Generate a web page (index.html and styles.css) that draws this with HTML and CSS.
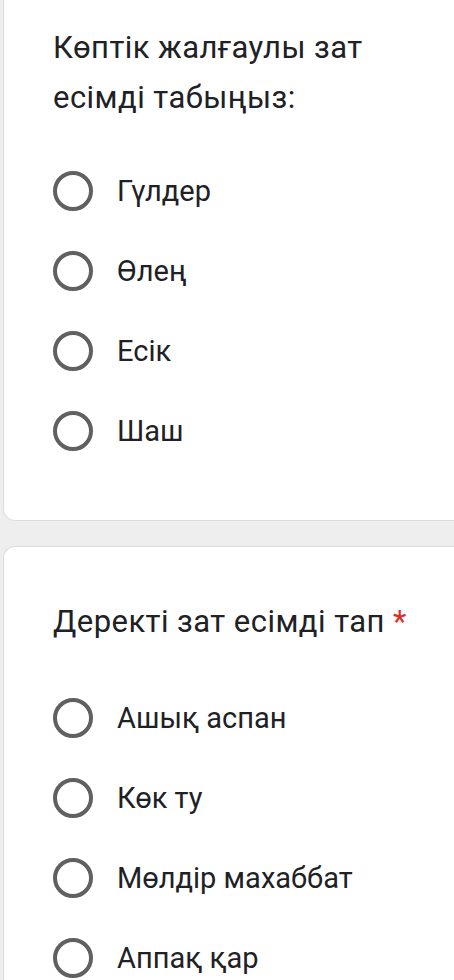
FILE: index.html
```html
<!DOCTYPE html>
<html lang="kk">
<head>
<meta charset="utf-8">
<link rel="stylesheet" href="styles.css">
</head>
<body>
<div class="page">
  <section class="card card-first">
    <div class="question">Көптік жалғаулы зат есімді табыңыз:</div>
    <div class="options">
      <div class="option"><span class="radio"></span><span class="label">Гүлдер</span></div>
      <div class="option"><span class="radio"></span><span class="label">Өлең</span></div>
      <div class="option"><span class="radio"></span><span class="label">Есік</span></div>
      <div class="option"><span class="radio"></span><span class="label">Шаш</span></div>
    </div>
  </section>
  <section class="card card-second">
    <div class="question">Деректі зат есімді тап <span class="req">*</span></div>
    <div class="options">
      <div class="option"><span class="radio"></span><span class="label">Ашық аспан</span></div>
      <div class="option"><span class="radio"></span><span class="label">Көк ту</span></div>
      <div class="option"><span class="radio"></span><span class="label">Мөлдір махаббат</span></div>
      <div class="option"><span class="radio"></span><span class="label">Аппақ қар</span></div>
    </div>
  </section>
</div>
</body>
</html>
```
FILE: styles.css
```css
html, body {
  margin: 0;
  padding: 0;
  background: #eeeeee;
}
body {
  font-family: Roboto, "Noto Sans", Arial, sans-serif;
  color: #202124;
  overflow: hidden;
  height: 980px;
}
.page {
  padding-left: 3px;
  display: flex;
  flex-direction: column;
  gap: 25px;
  height: 980px;
  box-sizing: border-box;
}
.card {
  background: #ffffff;
  border: 1px solid #dadce0;
  border-right: none;
  padding-left: 49px;
}
.card-first {
  border-top: none;
  border-bottom-left-radius: 12px;
  padding-top: 23px;
  padding-bottom: 69px;
}
.card-second {
  border-bottom: none;
  border-top-left-radius: 12px;
  padding-top: 50px;
  flex: 1;
  min-height: 0;
  overflow: hidden;
}
.question {
  font-size: 31px;
  letter-spacing: 0.45px;
  line-height: 50px;
  padding-right: 40px;
}
.req {
  color: #d93025;
}
.options {
  display: flex;
  flex-direction: column;
  gap: 40px;
  margin-top: 48px;
}
.card-second .options {
  margin-top: 51px;
}
.option {
  display: flex;
  align-items: center;
  gap: 24px;
  height: 40px;
}
.radio {
  width: 32px;
  height: 32px;
  border: 4px solid #5f6062;
  border-radius: 50%;
  flex: none;
}
.label {
  font-size: 29px;
  line-height: 40px;
}
```
